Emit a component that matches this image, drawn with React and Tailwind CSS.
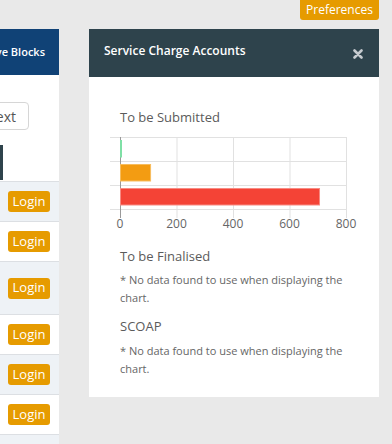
import React from "react";

const TICKS = [0, 200, 400, 600, 800];
const BARS = [
  { value: 6, fill: "#2ecc71", stroke: "#7fe0a6" },
  { value: 110, fill: "#f39c12", stroke: "#f7bd5e" },
  { value: 708, fill: "#f44336", stroke: "#f88a82" },
];

const ROWS = [
  { h: "h-[40px]", shade: true },
  { h: "h-[40px]", shade: false },
  { h: "h-[53px]", shade: true },
  { h: "h-[40px]", shade: false },
  { h: "h-[40px]", shade: true },
  { h: "h-[40px]", shade: false },
  { h: "h-[40px]", shade: true },
];

function BarChart() {
  // axis from x=31 to x=257 inside the svg, 0..800
  const scale = (v) => (v / 800) * 226;
  return (
    <svg width="290" height="105" className="block">
      {[7.5, 31.5, 55.5, 79.5].map((y) => (
        <line key={y} x1="21" x2="257" y1={y} y2={y} stroke="#e1e1e1" strokeWidth="1" />
      ))}
      {TICKS.map((t, i) => {
        const x = 31.5 + Math.round(scale(t) * 2) / 2;
        return (
          <line
            key={t}
            x1={x}
            x2={x}
            y1="7"
            y2="88"
            stroke={i === 0 ? "#9a9a9a" : "#e1e1e1"}
            strokeWidth="1"
          />
        );
      })}
      {BARS.map((b, i) => (
        <rect
          key={i}
          x="31.5"
          y={10.5 + i * 24}
          width={Math.max(scale(b.value) - 1, 1)}
          height="16.5"
          fill={b.fill}
          stroke={b.stroke}
          strokeWidth="1"
        />
      ))}
      {TICKS.map((t) => (
        <text
          key={t}
          x={31 + scale(t)}
          y="98"
          textAnchor="middle"
          fontSize="12"
          fill="#666"
          fontFamily="'Open Sans', sans-serif"
        >
          {t}
        </text>
      ))}
    </svg>
  );
}

function LeftPanel() {
  return (
    <div className="w-[59px] shrink-0 flex flex-col bg-white overflow-hidden">
      <div className="h-[46px] shrink-0 bg-[#104276] flex items-center justify-end pr-[14px] whitespace-nowrap">
        <span className="text-white text-[11px] font-semibold">Active Blocks</span>
      </div>
      <div className="h-[106px] shrink-0 flex flex-col">
        <div className="flex justify-end pr-[30px] pt-[27px] whitespace-nowrap">
          <div className="h-[28px] px-[12px] border border-[#d6d6d6] rounded-[4px] text-[14px] text-[#555] flex items-center">
            Next
          </div>
        </div>
        <div className="mt-[15px] w-[3px] h-[35px] bg-[#2e434c]" />
      </div>
      {ROWS.map((r, i) => (
        <div
          key={i}
          className={`${r.h} shrink-0 border-t border-[#dcdfe3] flex items-center pl-[8px] ${
            r.shade ? "bg-[#eef2f6]" : "bg-white"
          }`}
        >
          <div className="w-[42px] h-[21px] bg-[#e69b00] rounded-[3px] text-white text-[13px] flex items-center justify-center">
            Login
          </div>
        </div>
      ))}
    </div>
  );
}

function ChargePanel() {
  return (
    <div className="w-[290px] shrink-0 self-start">
      <div className="h-[48px] bg-[#2e434c] flex items-center justify-between pl-[15px] pr-[16px]">
        <span className="text-white text-[12px] font-semibold -mt-[5px]">Service Charge Accounts</span>
        <svg width="10" height="10" viewBox="0 0 10 10" className="mt-[1px]">
          <path d="M1.5 1.5 L8.5 8.5 M8.5 1.5 L1.5 8.5" stroke="#c6cbcf" strokeWidth="2.6" strokeLinecap="round" />
        </svg>
      </div>
      <div className="bg-white pt-[31px] pb-[19px]">
        <div className="px-[31px] text-[13px] leading-[18px] text-[#5b5b5b]">To be Submitted</div>
        <div className="mt-[4px]">
          <BarChart />
        </div>
        <div className="px-[31px] mt-[12px]">
          <div className="text-[13px] leading-[18px] text-[#5b5b5b]">To be Finalised</div>
          <p className="mt-[6px] text-[11px] leading-[18px] text-[#666]">
            * No data found to use when displaying the chart.
          </p>
          <div className="mt-[10px] text-[13px] leading-[18px] text-[#5b5b5b]">SCOAP</div>
          <p className="mt-[7px] text-[11px] leading-[18px] text-[#666]">
            * No data found to use when displaying the chart.
          </p>
        </div>
      </div>
    </div>
  );
}

export default function App() {
  return (
    <div
      className="w-[392px] h-[444px] bg-[#e9e9e9] overflow-hidden flex flex-col"
      style={{ fontFamily: "'Open Sans', sans-serif" }}
    >
      <div className="h-[29px] shrink-0 flex justify-end items-start pr-[13px]">
        <div className="w-[79px] h-[20px] bg-[#e69b00] rounded-b-[3px] text-white text-[12px] flex items-center justify-center">
          Preferences
        </div>
      </div>
      <div className="flex gap-[30px] shrink-0">
        <LeftPanel />
        <ChargePanel />
      </div>
    </div>
  );
}
